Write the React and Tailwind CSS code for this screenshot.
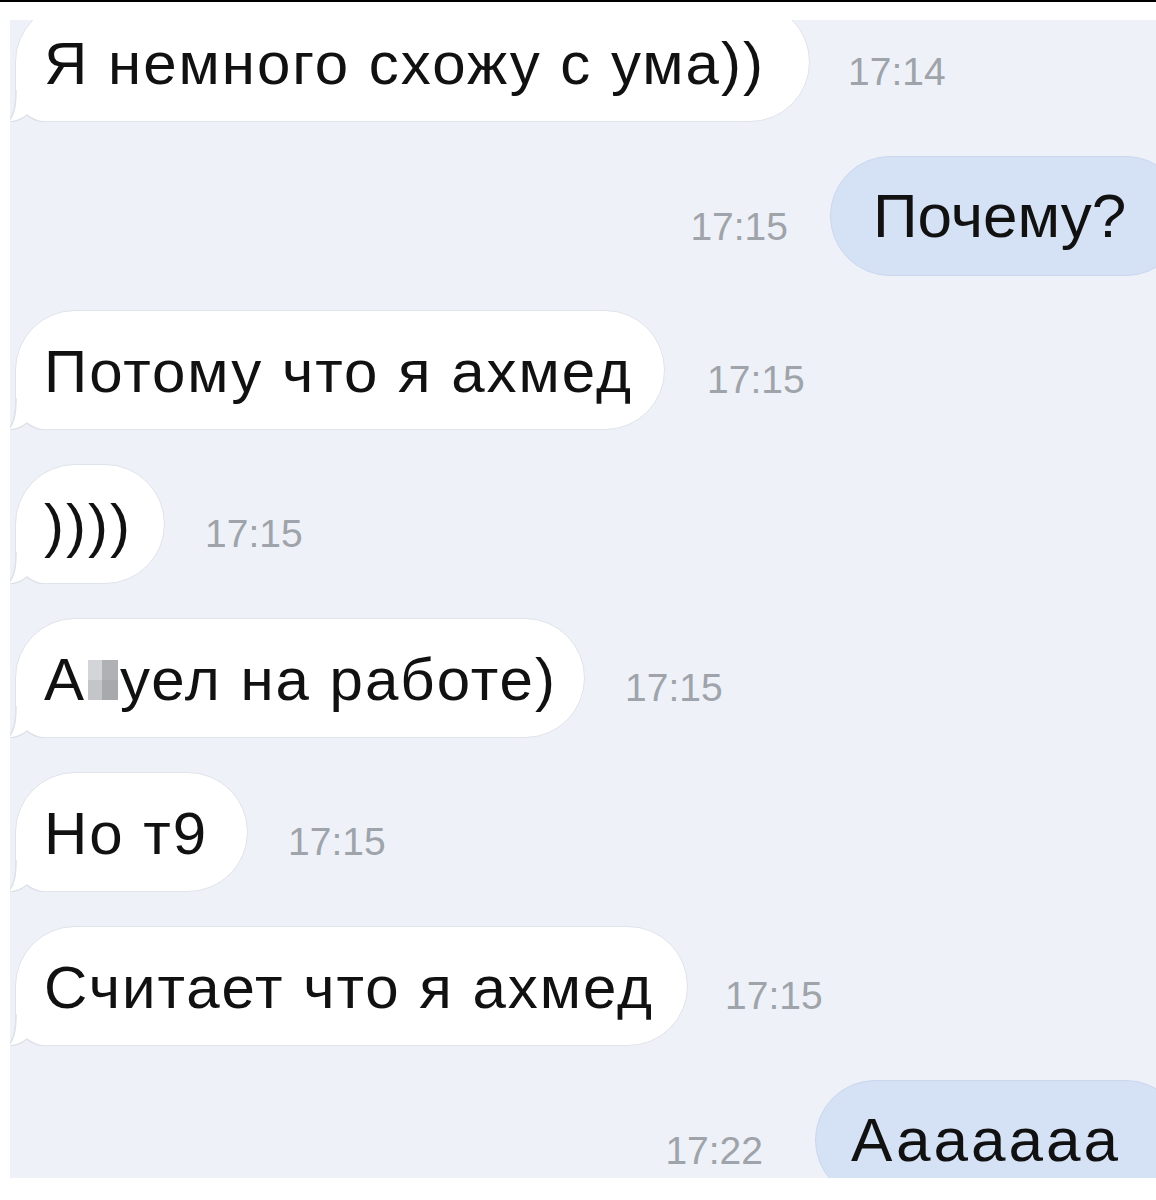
const MESSAGES = [
  { side: 'in', text: 'Я немного схожу с ума))', time: '17:14', w: 'w-[795px]', gap: 'ml-[38px]' },
  { side: 'out', text: 'Почему?', time: '17:15', w: 'w-[356px]', gap: 'mr-[42px]', ts: 'tracking-[0px]', pl: 'pl-[42px]' },
  { side: 'in', text: 'Потому что я ахмед', time: '17:15', w: 'w-[650px]', gap: 'ml-[42px]' },
  { side: 'in', text: '))))', time: '17:15', w: 'w-[150px]', gap: 'ml-[40px]' },
  { side: 'in', text: 'censored', time: '17:15', w: 'w-[570px]', gap: 'ml-[40px]' },
  { side: 'in', text: 'Но т9', time: '17:15', w: 'w-[233px]', gap: 'ml-[40px]' },
  { side: 'in', text: 'Считает что я ахмед', time: '17:15', w: 'w-[673px]', gap: 'ml-[37px]' },
  { side: 'out', text: 'Ааааааа', time: '17:22', w: 'w-[371px]', gap: 'mr-[52px]', ts: 'tracking-[3px]', pl: 'pl-[35px]' },
];

const font = { fontFamily: '"Liberation Sans", Arial, sans-serif' };

// little curled tail at the bottom-left corner of incoming bubbles
const Tail = () => (
  <svg className="absolute left-[-8px] bottom-[-1px]" width="40" height="32" viewBox="0 0 40 32">
    <path d="M8 0 C8 17 6 25 0 32 C8 32 14 29 19 25 C25 30 31 32 40 32 L40 0 Z" fill="#ffffff" />
    <path d="M8 0 C8 17 6 25 0 32 C8 32 14 29 19 25 C25 30 31 32 40 32" fill="none" stroke="#dde1e8" strokeWidth="1.5" />
  </svg>
);

// pixelated blur over the hidden letter
const Censor = () => (
  <span className="relative inline-block align-baseline w-[30px] h-[40px] mx-[2px] bg-[#b8b9bd]">
    <span className="absolute left-0 top-0 w-[14px] h-[20px] bg-[#d4d5d8]" />
    <span className="absolute right-0 top-0 w-[16px] h-[20px] bg-[#b0b1b5]" />
    <span className="absolute left-0 bottom-0 w-[14px] h-[20px] bg-[#c4c5c9]" />
    <span className="absolute right-0 bottom-0 w-[16px] h-[20px] bg-[#a8a9ad]" />
  </span>
);

const Incoming = ({ m }) => (
  <div className="flex items-center pl-[5px] h-[120px] shrink-0">
    <div className={`relative ${m.w} h-[120px] bg-white border border-[#dfe3ea] rounded-[60px] rounded-bl-[30px] flex items-center pl-[28px] pt-[4px]`}>
      <Tail />
      <span className="relative text-[60px] tracking-[2px] text-[#111] whitespace-nowrap leading-none">
        {m.text === 'censored' ? (
          <>А<Censor />уел на работе)</>
        ) : m.text}
      </span>
    </div>
    <span className={`${m.gap} mt-[18px] text-[39px] text-[#9fa3aa] leading-none`}>{m.time}</span>
  </div>
);

const Outgoing = ({ m }) => (
  <div className="flex items-center justify-end h-[120px] shrink-0 -mr-[30px]">
    <span className={`${m.gap} mt-[20px] text-[39px] text-[#9fa3aa] leading-none`}>{m.time}</span>
    <div className={`${m.w} h-[120px] bg-[#d5e1f5] border border-[#cbd7ec] rounded-[60px] flex items-center ${m.pl}`}>
      <span className={`text-[62px] ${m.ts} text-[#111] whitespace-nowrap leading-none`}>{m.text}</span>
    </div>
  </div>
);

export default function App() {
  return (
    <div className="w-[1156px] h-[1200px] bg-white overflow-hidden" style={font}>
      <div className="h-[2px] bg-black" />
      <div className="h-[18px]" />
      <div className="ml-[10px] h-[1158px] bg-[#eef1f8] overflow-hidden">
        <div className="flex flex-col gap-[34px] -mt-[18px]">
          {MESSAGES.map((m, i) =>
            m.side === 'in' ? <Incoming key={i} m={m} /> : <Outgoing key={i} m={m} />
          )}
        </div>
      </div>
    </div>
  );
}
